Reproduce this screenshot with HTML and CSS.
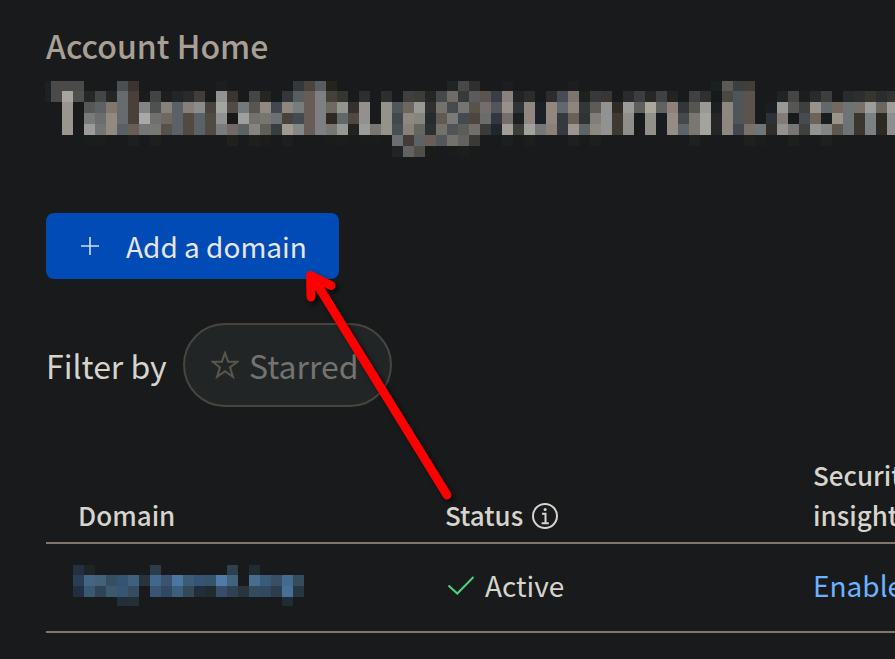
FILE: index.html
```html
<!DOCTYPE html>
<html lang="en">
<head>
<meta charset="utf-8">
<title>Account Home</title>
<link rel="stylesheet" href="styles.css">
</head>
<body>
<main class="page">
  <h2 class="eyebrow">Account Home</h2>
  <div class="mosaic mosaic-title" id="account-name"></div>

  <button class="add-button">
    <svg class="plus" viewBox="0 0 20 20"><path d="M10 1v18M1 10h18"/></svg>
    <span>Add a domain</span>
  </button>

  <div class="filters">
    <span class="filter-label">Filter by</span>
    <div class="pill">
      <svg class="star" viewBox="0 0 28 28"><path d="M14 1.800l3.100 9H26.400l-7.400 5.600 2.900 9.400L14 20.200l-7.900 5.600L9 16.400 1.600 10.800H10.900z"/></svg>
      <span>Starred</span>
    </div>
  </div>

  <section class="table">
    <div class="row head">
      <div class="cell domain">Domain</div>
      <div class="cell status">Status
        <svg class="info" viewBox="0 0 26 26"><circle cx="13" cy="13" r="12"/><path d="M10 10.700h3.500V20.300M9.600 20.300h7.200"/><circle class="dot" cx="13.100" cy="6.600" r="1.500"/></svg>
      </div>
      <div class="cell security">Security<br>insights</div>
    </div>
    <div class="row body">
      <div class="cell domain-value"><div class="mosaic mosaic-domain" id="domain-name"></div></div>
      <div class="cell status">
        <svg class="check" viewBox="0 0 28 22"><path d="M1.500 11.500L10.300 19.500L26.500 3"/></svg>
        <span>Active</span>
      </div>
      <div class="cell security"><a class="link">Enable</a></div>
    </div>
  </section>

  <svg class="arrow" viewBox="0 0 170 260">
    <g><path d="M147 235L12 16M11 37L10.500 15.500L31 25.500"/><path class="tip" d="M10 15l15 8-7 6-7 4z"/></g>
  </svg>
</main>
<script src="mosaic.js"></script>
</body>
</html>
```
FILE: mosaic.js
```js
// Obscured names drawn as colour blocks, one token per block; "." is empty.
const accountRows = [
  "1c2124 4a4a48 4a4a48 4a4a48 . . . 4c4f52 3a3330 . . . . . . . 1c1e1f . . . . . . 33393a 4a443e 585b5f 25231e . . . . . . . . . . 1f2425 484848 312f2e . . 1b1d1e . . . . . 1b1d1e . . . . . . . . . . . . 1b1f22 5d5a56 3b3f42 403f39 . . . . . . . . . . . . .",
  "1c2124 4a4a48 a8a5a0 4f504e 262727 444545 252626 666b6e 47403b 1b1d1d 424443 1d1f1e 222628 292a29 413d3b . 909392 3a3532 . 444545 252523 . 33363a 5a5d60 665e56 7d8083 45403a 353632 . 2d2f2f . 2d2f2f . 3e4040 3c3c39 262626 45494c 6f6b66 393939 5a5b5d 5a554f 383d46 89817b 222423 2c2c2d . 2c2c2d 474b55 7e746e 1f2020 38393a 393533 . 2a2b2c 3c3d3e 272726 3f4142 232320 . 404142 2f2f2d 151a1b 484943 4f5559 5b544d . . 1f2427 464543 1c1e1d 272b2e 3e3e3c . 292b2c 2d2e2f 363532 2a2d2f 343230",
  ". . 99958f . 555857 5e6163 80776f 666b6e 47403b 838585 50504e 86827a 5c6167 878079 8b8d8d 48433d a3a5a0 504b46 747a7c 585651 8f8982 42484d 8f877e 787c7c 665e56 7d8083 6d6a62 929490 352f2d 929190 . 95928a 50565a 6d685f 999894 303030 75726c 484b4d 747473 57534b 706f6d 535659 979087 303436 91877e 1b2029 91877e 62686c 8e867e 343637 5e5b57 929292 302b25 9b9b9b 5f5f5d aaa79d 606261 8c827b 32363a 575550 999995 1c2022 8e877f 4f5559 5b544d . 1a1e20 989894 565654 3e3f40 98938a 64686b 73695f 6e7375 78706b 9c9d9a 6b6760 9d9e9a",
  ". . 99958f . 797a7a 6c6d6e 928a80 666b6e 47403b a9aaa8 70706e 6c6961 5c6167 504a42 5c6167 504b42 909190 1a1917 9fa09e 72716e 777570 6c6f73 48423c 444a4f 665e56 7d8083 302822 626768 504943 929190 . 95928a 43484c 8d8981 86857f 252c31 605a53 7b7a76 454952 4d4640 6c6c6b 333840 766e68 1c2021 91877e 1b2029 91877e 343a40 6a6058 303334 7f7e7a 929292 3e3932 8f8e8a . 92908a 181c22 958c84 44494b 7a7671 a3a49e 262626 8e877f 4f5559 5b544d . 2c3238 827b76 181b1c 474a4f 6c635b 181d1e 98948a 6e7375 3c3530 7c8083 2d2a25 8c8e8f",
  ". . 99958f . 9a9b9a 737474 928a80 5a6065 685e56 727777 787873 55524b 5c6167 504a42 5c6167 504b42 777a7e 736a67 5c6262 85847e 5f5f58 383d42 a09a90 858887 665e56 7d8083 797773 979892 222221 9a9b9a 787774 95928a 494e52 898178 666660 2e2f2f 73716c 505456 5c5d5a 706f69 3c3a36 20262b a09e96 3c3c38 a0a29d 777777 8a8179 343a40 9d958f 606366 8b887e 929292 3e3932 8f8e8a . 92908a 181c22 958c84 5e6369 7a7671 a3a49e 262626 8e877f 444752 79706b 717578 302e29 929390 777674 40403e 929290 838483 5c574f 6e7375 3c3530 7c8083 2d2a25 8c8e8f",
  ". . . . 191d1c 1b1d1c . . 1d1f1e . 1d1f1e . . . . . . 1f211f . 1e201f 1c1d1b . 1d1e1f . . . 1a1c1c 1b1d1c . 1a1c1b 1a1c1b . 6a6e71 433b38 5c6265 685e56 53575a 72716c 626260 3a3935 . . 1b1f1f . 1c1e1e . . . 1e1f21 . 1d1f1e . . . . . . . . 1e2021 . . . . 1e201e 1b1d1d . . 1e201e . 191b1b 1d1f20 . . . . . .",
  ". . . . . . . . . . . . . . . . . . . . . . . . . . . . . . . . 202427 626262 514e49 191c19 . 181c1c 1b1e1d . . . . . . . . . . . . . . . . . . . . . . . . . . . . . . . . . . . . . . ."
];
const domainRows = [
  "223040 1e2424 . . . . . 2b3d4d . . . . . . 2e4050 . 202c34 . . . .",
  "293e56 426582 436178 354e64 365470 40617e 27343c 42678b 3a5470 4b76a2 3b5b76 355373 35536c 4e7ba7 42637d . 476e91 3a5a7a 384f65 456a91 344c5c",
  "232f40 3a5870 2f4354 3c5a6c 375673 344d60 . 385674 324862 3e5f7b 334958 202d3b 222a31 384e68 2f4254 28353e 324b5d 314861 2c3e4e 476f98 28363f",
  ". . . . 222e3b 252f36 . . . . . . . . . . . . . 1f2b37 ."
];

function drawMosaic(id, rows) {
  const host = document.getElementById(id);
  for (const row of rows) {
    for (const token of row.split(" ")) {
      const block = document.createElement("i");
      if (token !== ".") block.style.background = "#" + token;
      host.append(block);
    }
  }
}
drawMosaic("account-name", accountRows);
drawMosaic("domain-name", domainRows);
```
FILE: styles.css
```css
* { box-sizing: border-box; }
body {
  margin: 0;
  background: #181a1b;
  color: #d7d3cd;
  font-family: "Noto Sans CJK SC", "Noto Sans", sans-serif;
}
.page {
  position: relative;
  width: 895px;
  height: 659px;
  padding: 22px 0 0 46px;
  overflow: hidden;
}
.eyebrow {
  margin: 0;
  height: 59px;
  font-size: 32px;
  line-height: 46px;
  font-weight: 500;
  color: #a8a095;
}
.mosaic { display: grid; overflow: hidden; }
.mosaic-title {
  width: 850px;
  height: 76px;
  margin-left: -1px;
  grid-template-columns: 6px repeat(77, 11px);
  grid-template-rows: 10px repeat(6, 11px);
}
.mosaic-domain {
  width: 231px;
  grid-template-columns: repeat(21, 11px);
  grid-template-rows: 10px 11px 11px 9px;
}
.add-button {
  display: flex;
  align-items: center;
  width: 293px;
  height: 66px;
  margin-top: 56px;
  padding: 0 0 0 34px;
  border: 0;
  border-radius: 8px;
  background: #004bb5;
  color: #e8e6e3;
  font: 400 28px/66px "Noto Sans CJK SC", sans-serif;
  white-space: nowrap;
}
.plus { width: 20px; height: 20px; margin-right: 26px; fill: none; stroke: #d4dcea; stroke-width: 1.6; }
.filters { display: flex; align-items: center; height: 84px; margin-top: 44px; font-size: 32px; }
.filter-label { width: 137px; white-space: nowrap; }
.pill {
  display: flex;
  align-items: center;
  width: 209px;
  height: 84px;
  padding-left: 26px;
  border: 2px solid #48453f;
  border-radius: 42px;
  background: #222526;
  color: #747370;
}
.star { width: 28px; height: 28px; margin-right: 10px; fill: none; stroke: #5b564d; stroke-width: 2; }
.table { width: 900px; margin-top: 37px; }
.row { display: grid; grid-template-columns: 400px 367px 133px; border-bottom: 2px solid #80766a; }
.head { height: 100px; align-items: end; padding-bottom: 7px; font-size: 26px; line-height: 40px; font-weight: 500; }
.body { height: 89px; align-items: center; padding-bottom: 5px; font-size: 28px; }
.cell { white-space: nowrap; }
.domain { padding-left: 32px; }
.domain-value { padding-left: 27px; }
.status { display: flex; align-items: center; }
.head .status { margin-left: -1px; }
.info { width: 26px; height: 26px; margin: 2px 0 0 9px; fill: none; stroke: currentColor; stroke-width: 2; }
.info .dot { fill: currentColor; stroke: none; }
.check { width: 28px; height: 22px; margin: 0 10px 0 1px; fill: none; stroke: #4fd07f; stroke-width: 2; }
.link { color: #6bb2ff; }
.arrow { position: absolute; left: 300px; top: 260px; width: 170px; height: 260px; }
.arrow g { fill: none; stroke: #f00; stroke-width: 9; stroke-linecap: round; stroke-linejoin: round; filter: drop-shadow(3px 3px 2px rgba(0, 0, 0, .65)); }
.arrow .tip { fill: #f00; stroke: none; }
```
